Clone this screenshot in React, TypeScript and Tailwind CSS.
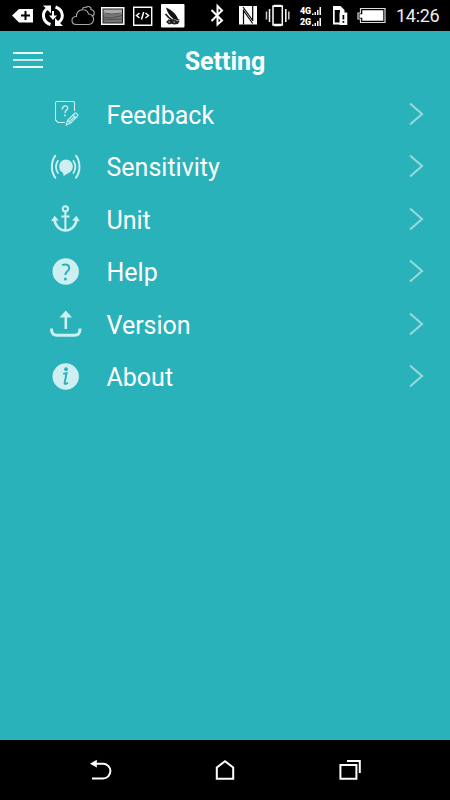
import type { ReactNode } from "react";

const FeedbackIcon = () => (
  <svg width="32" height="32" viewBox="50 98 32 32" fill="none" stroke="#cdeff2" strokeWidth="1.1">
    <path d="M65 122.500H58l-2.500-2.500v-17q0-1.500 1.500-1.500h16.500q1 0 1 1v8.500" />
    <path d="M62.300 109.500c0-4.700 5.700-4.500 5.400-1.200-.2 2.200-2.700 2-2.700 4.700" strokeWidth="1.4" />
    <path d="M65 114.600v1.700" strokeWidth="1.6" />
    <path d="m66.300 125 1.300-4.800 7.200-6.900q.8-.7 1.500 0l1.300 1.400q.6.800 0 1.400l-7 7zM67.700 120.400l2.900 2.800M73 115l2.800 2.700M69.200 121.800l5.400-5.100" strokeWidth="1.200" />
  </svg>
);

const SensitivityIcon = () => (
  <svg width="32" height="32" viewBox="50 150.500 32 32" fill="none" stroke="#cdeff2" strokeWidth="2" strokeLinecap="round">
    <path d="M65.700 158.900a7.100 7.100 0 0 1 2.400 13.800L63.700 175.400l-.8-3.200a7.100 7.100 0 0 1 2.800-13.300z" fill="#cdeff2" stroke="none" />
    <path d="M55.300 155.200c-4.600 6.500-4.600 15.500 0 22M76 155.200c4.600 6.500 4.600 15.500 0 22" />
    <path d="M57.900 160.200c-2.400 3.800-2.400 8.500 0 12.300M73.400 160.200c2.400 3.800 2.400 8.500 0 12.300" strokeWidth="1.800" />
  </svg>
);

const UnitIcon = () => (
  <svg width="32" height="32" viewBox="50 203 32 32" fill="none" stroke="#cdeff2" strokeWidth="2.100">
    <circle cx="65.400" cy="208.800" r="2.600" />
    <path d="M65.400 211.500v19M61.300 216.500h8.300" />
    <path d="M54.500 219.500c.5 6.300 5.200 10.900 11 10.900S76 225.800 76.500 219.500" strokeWidth="2.600" />
    <path d="M51 221.300l3.500-5.500 4.300 4.800zM79.900 221.300l-3.500-5.500-4.300 4.800z" fill="#cdeff2" stroke="none" />
  </svg>
);

const HelpIcon = () => (
  <svg width="32" height="32" viewBox="50 255.500 32 32" fill="none">
    <circle cx="65.700" cy="271" r="13.200" fill="#cdeff2" />
    <path d="M62.200 264.700c3.100-1.500 7-.8 7 2.700 0 3.500-3.800 3.400-3.800 7.200" stroke="#29b2ba" strokeWidth="2" />
    <circle cx="65.400" cy="278.600" r="1.500" fill="#29b2ba" />
  </svg>
);

const VersionIcon = () => (
  <svg width="32" height="32" viewBox="50 308 32 32" fill="none" stroke="#cdeff2">
    <path d="M51.500 328.500c0 4.800 1.500 6.800 5.500 6.800h17.500c4 0 5.500-2 5.500-6.800" strokeWidth="3" />
    <path d="M65.800 329v-13" strokeWidth="2.600" />
    <path d="M65.800 310.500l6.300 7h-12.600z" fill="#cdeff2" stroke="none" />
  </svg>
);

const AboutIcon = () => (
  <svg width="32" height="32" viewBox="50 360.500 32 32" fill="none">
    <circle cx="65.700" cy="376" r="13.200" fill="#cdeff2" />
    <circle cx="66" cy="368.700" r="1.900" fill="#29b2ba" />
    <path d="M63.200 373.300l3.400-.8-1.900 9.500c-.3 1.900.9 1.800 3.200.3" stroke="#29b2ba" strokeWidth="1.900" />
  </svg>
);

const items: { label: string; icon: ReactNode }[] = [
  { label: "Feedback", icon: <FeedbackIcon /> },
  { label: "Sensitivity", icon: <SensitivityIcon /> },
  { label: "Unit", icon: <UnitIcon /> },
  { label: "Help", icon: <HelpIcon /> },
  { label: "Version", icon: <VersionIcon /> },
  { label: "About", icon: <AboutIcon /> },
];

const StatusBar = () => (
  <div className="flex h-[31px] shrink-0 items-center bg-black pl-3">
    {/* notifications */}
    <svg width="22" height="31" viewBox="12 0 22 31">
      <path d="M12 15.500L19 9h14v13.500H19z" fill="#fff" />
      <path d="M25.500 11v9M21 15.500h9" stroke="#000" strokeWidth="2" />
    </svg>
    <svg className="ml-2" width="22" height="31" viewBox="42 0 22 31" fill="none" stroke="#fff" strokeWidth="3">
      <path d="M50.500 24.500C42 21.500 41.500 12 47.500 8.500M55.500 7c8.500 3 8.500 12 2.800 15.500" />
      <path d="M43 5.500h8v8zM63 26h-8v-8z" fill="#fff" stroke="none" />
      <path d="M53 11v6" strokeWidth="2" />
      <path d="M49 15.500h8l-4 4.500z" fill="#fff" stroke="none" />
    </svg>
    <svg className="ml-[7px]" width="24" height="31" viewBox="71 0 24 31" fill="none" stroke="#aaa" strokeWidth="1.100">
      <path d="M76.500 24.500c-6 0-6-8 0-8 0-8 10.500-9 12-2.500 6.500 0 7 10.500 0 10.500z" />
      <path d="M82.500 9c.5-2 2.500-2 3.500-1.500 2-2 5.500-.5 5 2 4 .5 4.500 6 .5 6.500" />
    </svg>
    <svg className="ml-[6px]" width="24" height="31" viewBox="101 0 24 31">
      <path d="M101 7h23.500v18H101z" fill="#fff" />
      <path d="M102.500 8.500h20.500v15h-20.500z" fill="#222" />
      <path d="M103.500 9.500h18.500v5h-18.500z" fill="#aaa" />
      <path d="M103.500 14h18.500v8.500h-18.500z" fill="#777" />
      <path d="M103.500 13l8 1 10.500-1M103.500 17.500l8 .5 10.500-2.500M103.500 20l9-.5 9.500-.5" fill="none" stroke="#444" strokeWidth=".8" />
    </svg>
    <svg className="ml-2" width="20" height="31" viewBox="133 0 20 31" fill="none" stroke="#fff">
      <path d="M133.700 7.200h18v18h-18z" strokeWidth="1.400" />
      <path d="M139.500 13l-3 2.500 3 2.500M145.500 13l3 2.500-3 2.500M143.700 12l-2.200 7.500" strokeWidth="1.500" />
    </svg>
    <svg className="ml-2" width="24" height="31" viewBox="161 0 24 31">
      <rect x="161" y="4" width="23.500" height="23.500" rx="1" fill="#fff" />
      <path d="M166 7.500c5.500 2.500 10 6 12 11.500l2 1-1.500.5-5-1.500c-4-3-6.500-7-7.500-11.500z" fill="#111" />
      <path d="M165.500 14c2 2.500 4 4.500 7 6.500" fill="none" stroke="#222" strokeWidth="1.800" />
      <path d="M166 22l2.500-2.500 3 .5 2-1 3 1.500 3 .5-1.500 3-4 .5-2.500-.8-2.500.8z" fill="#222" />
      <path d="M168.500 22h1.500M173.500 22h1.500" stroke="#ccc" />
    </svg>
    {/* system indicators */}
    <svg className="ml-[25px]" width="14" height="31" viewBox="210 0 14 31" fill="none" stroke="#fff" strokeWidth="2">
      <path d="M211.500 10l10.500 10.500-4.500 4V6l4.500 4.500L211.500 21" />
    </svg>
    <svg className="ml-[14px]" width="20" height="31" viewBox="238 0 20 31">
      <path d="M239 6h18v18.500h-18z" fill="#fff" />
      <path d="M243.500 24.500V9.500M252.700 21V6M243 7l9.700 13.500M243.500 10.500l9.200 13" fill="none" stroke="#000" strokeWidth="1.200" />
    </svg>
    <svg className="ml-[7px]" width="26" height="31" viewBox="265 0 26 31" fill="none" stroke="#fff" strokeWidth="1.500">
      <path d="M273 6h9.300v19H273z" />
      <path d="M274 5.800h7.300M274 25h7.300" strokeWidth="2.300" />
      <path d="M269.500 9v13M285.800 9v13" />
      <path d="M266.500 11.500v8M288.800 11.500v8" stroke="#ccc" />
    </svg>
    <div className="ml-[9px] flex w-[22px] flex-col gap-[2px] pt-[2px] font-['Roboto',sans-serif] text-[9px] leading-[9px] font-black text-white">
      {["4G", "2G"].map((network) => (
        <div key={network} className="flex items-end">
          <span className="w-[12px] tracking-[-0.3px]">{network}</span>
          <svg width="10" height="9" viewBox="0 0 10 9" fill="#fff">
            <path d="M0 6.500h1.500V8H0zM2.500 5h1.500v3H2.500zM5 3h1.500v5H5zM7.500 0H9v8H7.500z" />
          </svg>
        </div>
      ))}
    </div>
    <svg className="ml-[11px]" width="15" height="31" viewBox="333 0 15 31">
      <path d="M333 6h7.500l4 4v14.500H333z" fill="#fff" />
      <path d="M334.700 10h5.300v12.500h-5.300z" fill="#000" />
      <path d="M339.500 12.500h7.800v12.500h-7.800z" fill="#fff" />
      <path d="M343.400 15v4.500M343.400 21v1.800" stroke="#000" strokeWidth="1.700" />
    </svg>
    <svg className="ml-[9px]" width="30" height="31" viewBox="357 0 30 31">
      <path d="M360.500 8.500h24.500v14h-24.500v-3.500h-2.500v-6h2.500z" fill="none" stroke="#ddd" strokeWidth="1.200" />
      <path d="M362.300 10.300h21v10.500h-21v-3h-2.800v-3.500h2.800z" fill="#fff" />
    </svg>
    <span className="ml-[9px] pt-px text-[18px] leading-none tracking-[-0.3px] text-[#eee]">14:26</span>
  </div>
);

const NavBar = () => (
  <div className="flex h-[60px] shrink-0 items-center justify-between bg-black px-[88px]">
    <svg width="24" height="24" viewBox="88 758 24 24" fill="none" stroke="#fff" strokeWidth="2">
      <path d="M95 763.700h8a7.300 7.300 0 0 1 0 14.800H92" />
      <path d="M90 763.700l6.800-3.900v7.800z" fill="#fff" stroke="none" />
    </svg>
    <svg width="24" height="24" viewBox="213 758 24 24" fill="none" stroke="#fff" strokeWidth="2">
      <path d="M216.800 767.500l8.200-6.300 8.200 6.300v11.200h-16.400z" />
    </svg>
    <svg width="24" height="24" viewBox="338 758 24 24" fill="none" stroke="#fff" strokeWidth="2">
      <path d="M340.400 765h16v13.700h-16z" />
      <path d="M347 761h12.800v12" />
    </svg>
  </div>
);

export default function App() {
  return (
    <div className="flex h-[800px] w-[450px] flex-col overflow-hidden bg-[#29b2ba] font-['Roboto',sans-serif] text-white">
      <StatusBar />
      <header className="grid h-[57px] shrink-0 grid-cols-[1fr_auto_1fr] items-center px-[13px]">
        <button type="button" aria-label="Menu" className="flex w-[30px] flex-col gap-[5px]">
          <span className="h-[2px] bg-[#eafbfc]" />
          <span className="h-[2px] bg-[#c4ecee]" />
          <span className="h-[2px] bg-[#eafbfc]" />
        </button>
        <h1 className="pt-[3px] text-[25px] leading-none font-bold">Setting</h1>
      </header>
      <ul className="flex-1">
        {items.map(({ label, icon }) => (
          <li key={label} className="flex h-[52.5px] items-center pr-[26px] pl-[50px]">
            {icon}
            <span className="ml-[24.5px] flex-1 pt-[2px] text-[25px] leading-none">{label}</span>
            <svg className="mb-px" width="15" height="24" viewBox="0 0 15 24" fill="none" stroke="#94d8dd" strokeWidth="2.200">
              <path d="M1 1.500l12 10.500L1 22.500" />
            </svg>
          </li>
        ))}
      </ul>
      <NavBar />
    </div>
  );
}
